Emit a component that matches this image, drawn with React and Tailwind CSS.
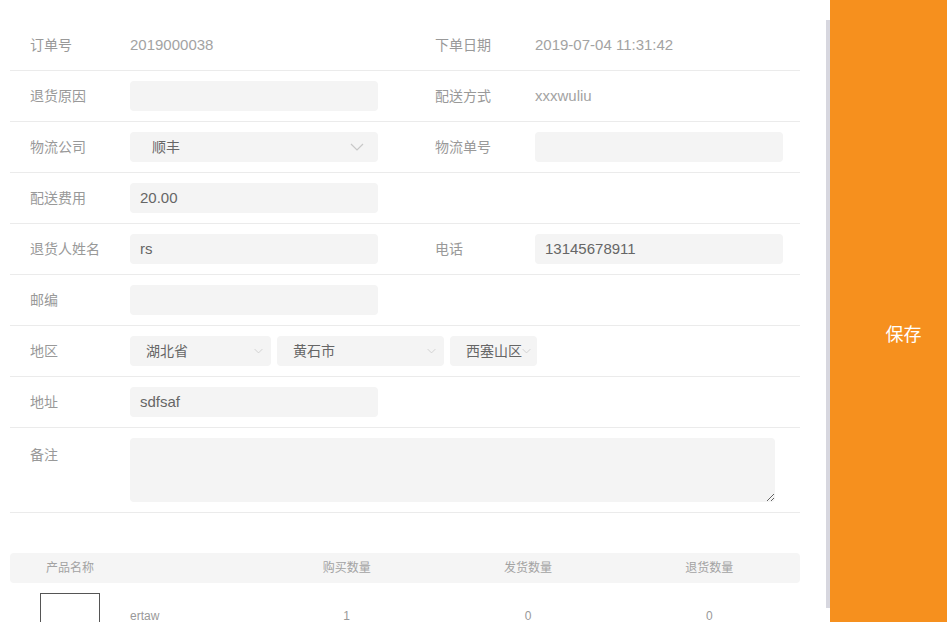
import React from "react";

const font = { fontFamily: '"Liberation Sans", "Noto Sans CJK SC", sans-serif' };

const Chevron = ({ className = "w-[14px] h-[8px]" }) => (
  <svg viewBox="0 0 14 8" className={className} fill="none">
    <path d="M1 1l6 6 6-6" stroke="#c8c8c8" strokeWidth="1.2" />
  </svg>
);

const Label = ({ children }) => (
  <div className="w-[120px] shrink-0 pl-[20px] text-[14px] text-[#999]">{children}</div>
);

const Input = ({ value }) => (
  <div className="w-[248px] h-[30px] bg-[#f4f4f4] rounded-[4px] pl-[10px] flex items-center text-[15px] text-[#666]">
    {value}
  </div>
);

const Text = ({ children }) => (
  <div className="text-[15px] text-[#a3a3a3]">{children}</div>
);

const Row = ({ children }) => (
  <div className="flex items-center h-[51px] border-b border-[#ebebeb]">{children}</div>
);

const Half = ({ children }) => (
  <div className="w-[405px] shrink-0 flex items-center">{children}</div>
);

const products = [{ name: "ertaw", buy: 1, sent: 0, back: 0 }];

export default function App() {
  return (
    <div className="flex h-screen overflow-hidden bg-white" style={font}>
      <div className="w-[826px] overflow-hidden">
        <div className="w-[790px] ml-[10px] pt-[20px]">
          <Row>
            <Half>
              <Label>订单号</Label>
              <Text>2019000038</Text>
            </Half>
            <Half>
              <Label>下单日期</Label>
              <Text>2019-07-04 11:31:42</Text>
            </Half>
          </Row>
          <Row>
            <Half>
              <Label>退货原因</Label>
              <Input value="" />
            </Half>
            <Half>
              <Label>配送方式</Label>
              <Text>xxxwuliu</Text>
            </Half>
          </Row>
          <Row>
            <Half>
              <Label>物流公司</Label>
              <div className="w-[248px] h-[30px] bg-[#f4f4f4] rounded-[4px] pl-[22px] pr-[14px] flex items-center justify-between text-[14px] text-[#666]">
                <span>顺丰</span>
                <Chevron />
              </div>
            </Half>
            <Half>
              <Label>物流单号</Label>
              <Input value="" />
            </Half>
          </Row>
          <Row>
            <Half>
              <Label>配送费用</Label>
              <Input value="20.00" />
            </Half>
          </Row>
          <Row>
            <Half>
              <Label>退货人姓名</Label>
              <Input value="rs" />
            </Half>
            <Half>
              <Label>电话</Label>
              <Input value="13145678911" />
            </Half>
          </Row>
          <Row>
            <Half>
              <Label>邮编</Label>
              <Input value="" />
            </Half>
          </Row>
          <Row>
            <Label>地区</Label>
            <div className="flex gap-[6px]">
              <div className="w-[141px] h-[30px] bg-[#f4f4f4] rounded-[4px] pl-[16px] pr-[8px] flex items-center justify-between text-[14px] text-[#666]">
                <span>湖北省</span>
                <Chevron className="w-[9px] h-[6px]" />
              </div>
              <div className="w-[167px] h-[30px] bg-[#f4f4f4] rounded-[4px] pl-[16px] pr-[8px] flex items-center justify-between text-[14px] text-[#666]">
                <span>黄石市</span>
                <Chevron className="w-[9px] h-[6px]" />
              </div>
              <div className="w-[87px] h-[30px] bg-[#f4f4f4] rounded-[4px] pl-[16px] flex items-center text-[14px] text-[#666]">
                <span>西塞山区</span>
                <Chevron className="w-[9px] h-[6px]" />
              </div>
            </div>
          </Row>
          <Row>
            <Half>
              <Label>地址</Label>
              <Input value="sdfsaf" />
            </Half>
          </Row>
          <div className="flex items-start h-[85px] border-b border-[#ebebeb] pt-[10px]">
            <div className="pt-[7px]">
              <Label>备注</Label>
            </div>
            <textarea className="w-[645px] h-[64px] bg-[#f4f4f4] rounded-[4px] outline-none" />
          </div>

          <div className="mt-[40px] grid grid-cols-[246px_1fr_1fr_1fr] h-[30px] items-center bg-[#f5f5f5] rounded-[4px] text-[12px] text-[#a3a3a3]">
            <div className="pl-[36px]">产品名称</div>
            <div className="text-center">购买数量</div>
            <div className="text-center">发货数量</div>
            <div className="text-center">退货数量</div>
          </div>
          {products.map((p) => (
            <div
              key={p.name}
              className="grid grid-cols-[246px_1fr_1fr_1fr] pt-[10px] text-[12px] leading-[16px] text-[#999]"
            >
              <div className="flex items-start pl-[30px]">
                <div className="w-[60px] h-[60px] border border-[#555]" />
                <span className="ml-[30px] mt-[15px]">{p.name}</span>
              </div>
              <div className="text-center mt-[15px]">{p.buy}</div>
              <div className="text-center mt-[15px]">{p.sent}</div>
              <div className="text-center mt-[15px]">{p.back}</div>
            </div>
          ))}
        </div>
      </div>
      <div className="w-[4px]">
        <div className="mt-[20px] h-[588px] bg-[#d7d7df]" />
      </div>
      <button className="flex-1 bg-[#f6901e] flex items-center justify-center pl-[30px] pt-[48px] text-white text-[18px]">
        保存
      </button>
    </div>
  );
}
